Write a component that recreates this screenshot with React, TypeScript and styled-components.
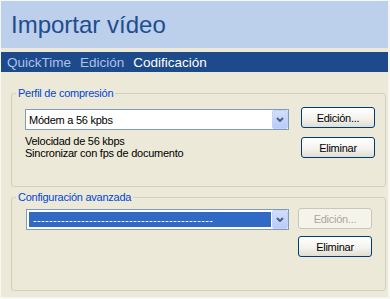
import React from "react";
import styled, { createGlobalStyle } from "styled-components";

const GlobalStyle = createGlobalStyle`
  html, body {
    margin: 0;
    padding: 0;
    background: #ece9d8;
  }
  body {
    font-family: "Liberation Sans", Arial, sans-serif;
  }
`;

const Page = styled.div`
  box-sizing: border-box;
  height: 299px;
  border-style: solid;
  border-color: #f7f6f0;
  border-width: 1px 2px 2px 1px;
  background: #ece9d8;
  display: flex;
  flex-direction: column;
`;

const Header = styled.header`
  height: 47px;
  background: #bccfeb;
  display: flex;
  align-items: center;
  padding-left: 10px;
`;

const Title = styled.h1`
  margin: 0;
  font-family: "Liberation Sans", Arial, sans-serif;
  font-size: 24px;
  font-weight: normal;
  color: #214d8f;
`;

const NavBar = styled.nav`
  margin-top: 4px;
  height: 20px;
  box-sizing: border-box;
  padding: 2px 0 0 6px;
  background: #1d4a8b;
  display: flex;
  gap: 9px;
  font-size: 13.5px;
  line-height: 18px;
`;

const NavItem = styled.span<{ $active?: boolean }>`
  color: ${(p) => (p.$active ? "#ffffff" : "#adc2e7")};
`;

const Content = styled.main`
  padding: 14px 2px 0 10px;
  display: flex;
  flex-direction: column;
  gap: 3px;
`;

const Group = styled.fieldset`
  margin: 0;
  padding: 0;
  min-inline-size: 0;
  border: 1px solid #d0d0bf;
  border-radius: 3px;
`;

const Legend = styled.legend`
  margin-left: 4px;
  padding: 0 2px;
  font-size: 11px;
  line-height: 14px;
  letter-spacing: -0.25px;
  color: #0046d5;
`;

const GroupBody = styled.div<{ $pad: string; $gap: number }>`
  padding: ${(p) => p.$pad};
  display: flex;
  gap: ${(p) => p.$gap}px;
`;

const LeftCol = styled.div`
  flex: 1;
  min-width: 0;
  display: flex;
  flex-direction: column;
`;

const ButtonCol = styled.div<{ $gap: number }>`
  width: 74px;
  flex: none;
  display: flex;
  flex-direction: column;
  gap: ${(p) => p.$gap}px;
`;

const SelectBox = styled.div<{ $top: number }>`
  margin-top: ${(p) => p.$top}px;
  height: 21px;
  box-sizing: border-box;
  border: 1px solid #7f9db9;
  background: #ffffff;
  display: flex;
`;

const SelectValue = styled.div<{ $selected?: boolean }>`
  flex: 1;
  min-width: 0;
  overflow: hidden;
  white-space: nowrap;
  display: flex;
  align-items: center;
  margin: ${(p) => (p.$selected ? "2px 1px 2px 2px" : "0")};
  padding-left: ${(p) => (p.$selected ? "4px" : "3px")};
  background: ${(p) => (p.$selected ? "#316ac5" : "transparent")};
  color: ${(p) => (p.$selected ? "#ffffff" : "#000000")};
  font-size: 11px;
  letter-spacing: ${(p) => (p.$selected ? "0.34px" : "-0.25px")};
`;

const Arrow = styled.span`
  width: 16px;
  flex: none;
  box-sizing: border-box;
  display: flex;
  align-items: center;
  justify-content: center;
  background: linear-gradient(180deg, #d3defd 0%, #b9cbf7 100%);
  border: 1px solid #c4d3fb;
  border-radius: 2px;
`;

const Info = styled.div`
  margin-top: 5px;
  font-size: 11px;
  line-height: 12px;
  letter-spacing: -0.25px;
  color: #000000;
`;

const Button = styled.button`
  height: 21px;
  width: 100%;
  box-sizing: border-box;
  padding: 0;
  border: 1px solid #003c74;
  border-radius: 3px;
  background: linear-gradient(180deg, #ffffff 0%, #f4f3ee 55%, #e0ddd2 100%);
  font-family: "Liberation Sans", Arial, sans-serif;
  font-size: 11px;
  letter-spacing: -0.25px;
  color: #000000;

  &:disabled {
    border-color: #c9c7ba;
    background: #f5f4ea;
    color: #aca899;
  }
`;

const Chevron = () => (
  <svg width="8" height="5" viewBox="0 0 8 5">
    <polyline points="1,1 4,4 7,1" fill="none" stroke="#4d6185" strokeWidth="2" />
  </svg>
);

export default function App() {
  return (
    <>
      <GlobalStyle />
      <Page>
        <Header>
          <Title>Importar vídeo</Title>
        </Header>
        <NavBar>
          <NavItem>QuickTime</NavItem>
          <NavItem>Edición</NavItem>
          <NavItem $active>Codificación</NavItem>
        </NavBar>
        <Content>
          <Group>
            <Legend>Perfil de compresión</Legend>
            <GroupBody $pad="7px 10px 27px 13px" $gap={12}>
              <LeftCol>
                <SelectBox $top={2}>
                  <SelectValue>Módem a 56 kpbs</SelectValue>
                  <Arrow>
                    <Chevron />
                  </Arrow>
                </SelectBox>
                <Info>
                  Velocidad de 56 kbps
                  <br />
                  Sincronizar con fps de documento
                </Info>
              </LeftCol>
              <ButtonCol $gap={9}>
                <Button>Edición...</Button>
                <Button>Eliminar</Button>
              </ButtonCol>
            </GroupBody>
          </Group>
          <Group>
            <Legend>Configuración avanzada</Legend>
            <GroupBody $pad="4px 13px 33px 14px" $gap={9}>
              <LeftCol>
                <SelectBox $top={1}>
                  <SelectValue $selected>{"-".repeat(45)}</SelectValue>
                  <Arrow>
                    <Chevron />
                  </Arrow>
                </SelectBox>
              </LeftCol>
              <ButtonCol $gap={7}>
                <Button disabled>Edición...</Button>
                <Button>Eliminar</Button>
              </ButtonCol>
            </GroupBody>
          </Group>
        </Content>
      </Page>
    </>
  );
}
